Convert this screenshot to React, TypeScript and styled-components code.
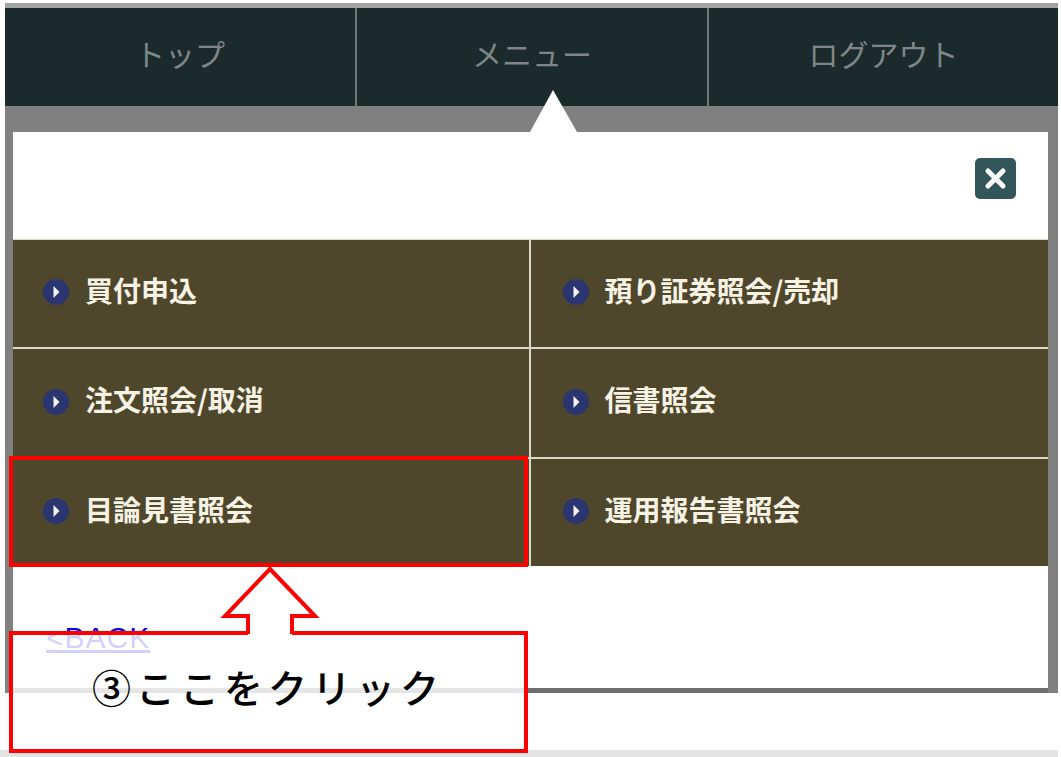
import * as React from 'react'
import styled, { createGlobalStyle } from 'styled-components'

const GlobalStyle = createGlobalStyle`
  html, body {
    margin: 0;
    padding: 0;
    background: #fff;
  }
  * {
    box-sizing: border-box;
  }
`
const Page = styled.div`
  position: relative;
  width: 1061px;
  height: 757px;
  overflow: hidden;
  display: flex;
  flex-direction: column;
  font-family: 'Noto Sans CJK JP', 'Liberation Sans', sans-serif;
`
const Frame = styled.div`
  margin: 3px 3px 0 5px;
  height: 690px;
  background: #808080;
  border-top: 5px solid #a3a3a3;
  display: flex;
  flex-direction: column;
`
const Nav = styled.nav`
  height: 98px;
  flex: none;
  background: #1b2a2b;
  display: grid;
  grid-template-columns: 350px 352px 1fr;
`
const NavItem = styled.a`
  display: flex;
  align-items: center;
  justify-content: center;
  padding-bottom: 8px;
  font-size: 30px;
  color: #7f8687;
  border-left: ${({ $first }: { $first?: boolean }) => ($first ? 'none' : '2px solid #6f7878')};
`
const Modal = styled.div`
  position: relative;
  margin: 26px 10px 0 8px;
  height: 556px;
  background: #fff;
  box-shadow: 0 5px 0 #6f6f6f;
  &::before {
    content: '';
    position: absolute;
    left: 517px;
    top: -42px;
    border-left: 23px solid transparent;
    border-right: 24px solid transparent;
    border-bottom: 42px solid #fff;
  }
`
const ModalHeader = styled.div`
  height: 106.5px;
  display: flex;
  justify-content: flex-end;
  padding: 26px 32px 0 0;
`
const CloseButton = styled.button`
  width: 41px;
  height: 41px;
  padding: 0;
  border: none;
  border-radius: 5px;
  background: #33565a;
  display: flex;
  align-items: center;
  justify-content: center;
`
const MenuGrid = styled.div`
  display: grid;
  grid-template-columns: 515.5px 1fr;
  grid-auto-rows: 107.5px;
  column-gap: 2px;
  row-gap: 2px;
  padding-top: 1px;
  background: #dcd8c6;
`
const MenuItem = styled.a`
  display: flex;
  align-items: center;
  gap: 16px;
  padding: 0 0 7px 30px;
  background: #4f472c;
  color: #f6f2e4;
  font-size: 28px;
  font-weight: 700;
  line-height: 1;
  &:nth-child(even) {
    padding-left: 32px;
  }
`
const Bullet = styled.svg`
  flex: none;
  width: 26px;
  height: 26px;
  margin-top: 5px;
`
const BackLink = styled.a`
  display: inline-block;
  margin: 54px 0 0 33px;
  font-family: 'Liberation Sans', sans-serif;
  font-size: 30px;
  letter-spacing: 1px;
  line-height: 36px;
  color: #0000ee;
  text-decoration: underline;
`
const BottomStrip = styled.div`
  margin: auto 3px 0 0;
  height: 7px;
  background: #e4e4e4;
`
const Highlight = styled.div`
  position: absolute;
  left: 9px;
  top: 456px;
  width: 519px;
  height: 111px;
  border: 4px solid #ff0000;
`
const CalloutBox = styled.div`
  position: absolute;
  left: 9px;
  top: 631px;
  width: 519px;
  height: 122px;
  border: 4px solid #ff0000;
  background: rgba(255, 255, 255, 0.82);
  padding: 23px 0 0 79px;
  font-size: 39px;
  font-weight: 500;
  letter-spacing: 5px;
  line-height: 56px;
  color: #000;
  white-space: nowrap;
`
const CalloutArrow = styled.svg`
  position: absolute;
  left: 215px;
  top: 562px;
  width: 110px;
  height: 78px;
`

const menuItems = [
  '買付申込',
  '預り証券照会/売却',
  '注文照会/取消',
  '信書照会',
  '目論見書照会',
  '運用報告書照会',
]

export default function App() {
  return (
    <Page>
      <GlobalStyle />
      <Frame>
        <Nav>
          <NavItem $first>トップ</NavItem>
          <NavItem>メニュー</NavItem>
          <NavItem>ログアウト</NavItem>
        </Nav>
        <Modal>
          <ModalHeader>
            <CloseButton aria-label="close">
              <svg width="25" height="25" viewBox="0 0 25 25">
                <path d="M5 5L20 20M20 5L5 20" stroke="#fff" strokeWidth="5" strokeLinecap="round" />
              </svg>
            </CloseButton>
          </ModalHeader>
          <MenuGrid>
            {menuItems.map((label) => (
              <MenuItem key={label}>
                <Bullet viewBox="0 0 26 26">
                  <circle cx="13" cy="13" r="13" fill="#2b3570" />
                  <path d="M10.5 7L16.5 13L10.5 19Z" fill="#f4f4f4" />
                </Bullet>
                {label}
              </MenuItem>
            ))}
          </MenuGrid>
          <BackLink>&lt;BACK</BackLink>
        </Modal>
      </Frame>
      <BottomStrip />
      <Highlight />
      <CalloutBox>③ここをクリック</CalloutBox>
      <CalloutArrow viewBox="0 0 110 78">
        <path d="M55 7L100 54H77V73H33V54H8Z" fill="#fff" />
        <path d="M33 72V54H10L55 7L100 54H77V72" fill="none" stroke="#ff0000" strokeWidth="4" />
      </CalloutArrow>
    </Page>
  )
}
